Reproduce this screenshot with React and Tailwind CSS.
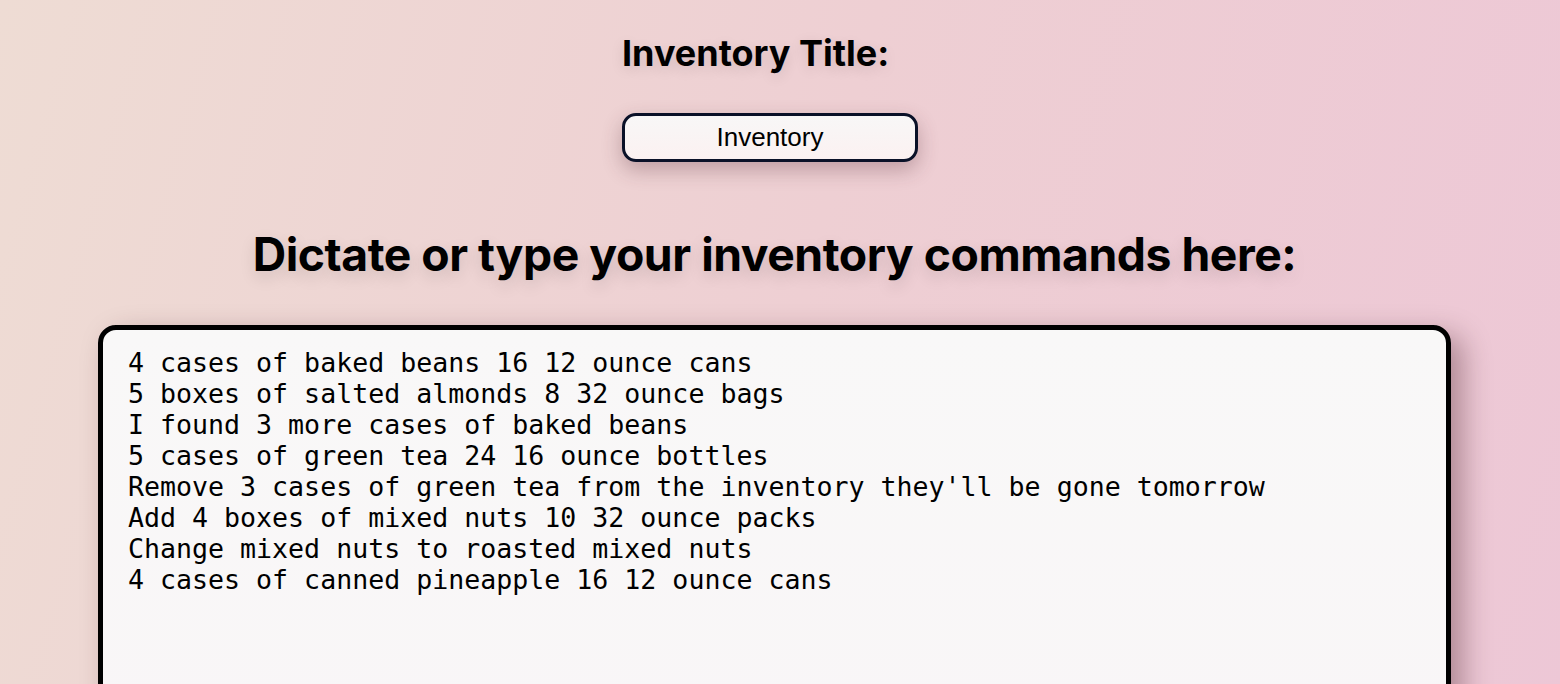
import React, { useState } from 'react';

const initialCommands = [
  '4 cases of baked beans 16 12 ounce cans',
  '5 boxes of salted almonds 8 32 ounce bags',
  'I found 3 more cases of baked beans',
  '5 cases of green tea 24 16 ounce bottles',
  "Remove 3 cases of green tea from the inventory they'll be gone tomorrow",
  'Add 4 boxes of mixed nuts 10 32 ounce packs',
  'Change mixed nuts to roasted mixed nuts',
  '4 cases of canned pineapple 16 12 ounce cans',
].join('\n');

const App = () => {
  const [title, setTitle] = useState('Inventory');
  const [commands, setCommands] = useState(initialCommands);

  return (
    <div className="min-h-screen overflow-hidden bg-[linear-gradient(105deg,#eedcd4_0%,#eecfd3_50%,#edc7d6_100%)] font-['Inter',sans-serif] text-black">
      <div className="flex flex-col items-center pr-[11px] pt-[28px]">
        <div className="mr-[9px] flex w-[296px] flex-col items-start">
          <label className="whitespace-nowrap text-[36px] font-bold leading-[50px] [text-shadow:0_4px_14px_rgba(0,0,0,0.12)]">
            Inventory Title:
          </label>
          <input
            value={title}
            onChange={(e) => setTitle(e.target.value)}
            className="mt-[35px] h-[49px] w-[296px] rounded-[14px] border-[3px] border-[#0a1128] bg-[linear-gradient(180deg,#f8f7f7,#fbf1f1)] text-center font-['Liberation_Sans',Arial,sans-serif] text-[26px] text-black shadow-[0_8px_20px_rgba(80,40,50,0.3)] outline-none"
          />
        </div>

        <h1 className="mt-[62px] whitespace-nowrap text-[46.3px] font-bold leading-[60px] tracking-[-0.01em] [text-shadow:0_6px_16px_rgba(0,0,0,0.13)]">
          Dictate or type your inventory commands here:
        </h1>

        <textarea
          value={commands}
          onChange={(e) => setCommands(e.target.value)}
          className="mt-[41px] h-[420px] w-[1353px] resize-none rounded-[18px] border-[5px] border-black bg-[linear-gradient(180deg,#f9f8f8,#f9f6f7)] px-[25px] py-[17px] font-['DejaVu_Sans_Mono',monospace] text-[26.6px] leading-[31px] text-black shadow-[12px_10px_28px_rgba(60,20,30,0.35)] outline-none"
        />
      </div>
    </div>
  );
};

export default App;
